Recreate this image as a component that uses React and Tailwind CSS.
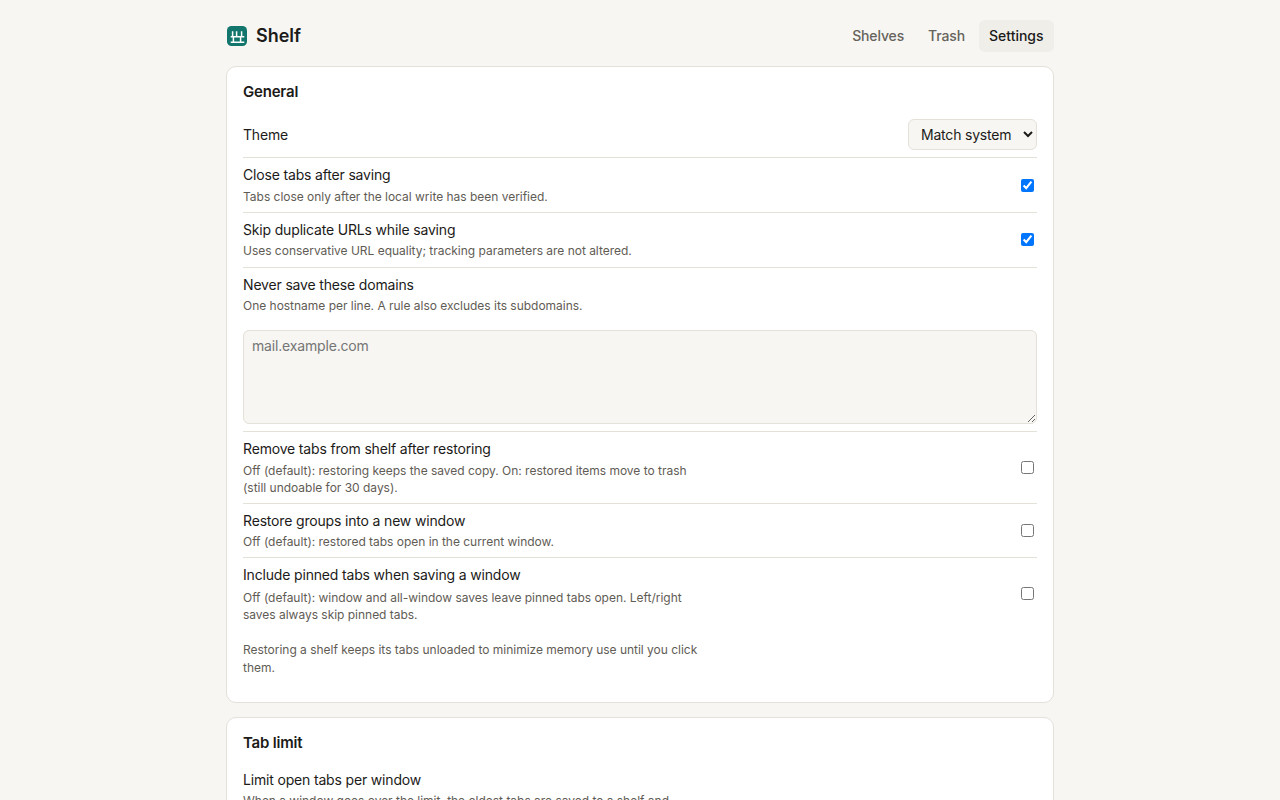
const sans = "font-['Inter',sans-serif]";
const title = "text-[14px] leading-[20px] tracking-[-0.17px] text-[#1c1b19]";
const noteBase = "text-[12px] tracking-[-0.02px] text-[#5f5c55]";
const note = `leading-[18px] ${noteBase}`;
const noteTight = `leading-[17px] ${noteBase}`;
const heading = "text-[15px] leading-[20px] tracking-[-0.2px] font-semibold text-[#1c1b19]";

function Row({ name, desc, checked, descGap = "mt-[2px]", bottom = "pb-[7px]", border = true, descClass = note, box = "mt-[2px] mb-[4px]" }) {
  return (
    <div className={`flex justify-between items-center pt-[7px] ${bottom} ${border ? "border-b border-[#e4e1d9]" : ""}`}>
      <div className="max-w-[460px]">
        <div className={title}>{name}</div>
        <div className={`${descGap} ${descClass}`}>{desc}</div>
      </div>
      <input type="checkbox" defaultChecked={checked} className={`mx-[3px] ${box} w-[13px] h-[13px] shrink-0`} />
    </div>
  );
}

export default function App() {
  return (
    <div className={`h-screen overflow-hidden bg-[#f7f6f2] ${sans}`}>
      <div className="w-[828px] mx-auto">
        <header className="flex items-center justify-between pt-5 pb-[14px]">
          <div className="flex items-center gap-2">
            <svg width="22" height="22" viewBox="0 0 22 22" className="block">
              <rect x="1" y="1" width="20" height="20" rx="4.5" fill="#12766c" />
              <path d="M4.7 11.7h13.6M4.7 17.2h13.6" stroke="#fff" strokeWidth="1.5" fill="none" />
              <path d="M6.6 6.2v5M10.6 6.2v5M15.6 6.2v5M7.4 12v5M14.6 12v5" stroke="#fff" strokeWidth="1.5" fill="none" />
            </svg>
            <span className="text-[18px] leading-[32px] font-semibold text-[#1c1b19]">Shelf</span>
          </div>
          <nav className="flex items-center gap-1">
            <a className="px-[10px] pb-[1px] h-8 flex items-center rounded-md text-[14px] tracking-[-0.14px] font-medium text-[#66635c]">Shelves</a>
            <a className="px-[10px] pb-[1px] h-8 flex items-center rounded-md text-[14px] tracking-[-0.14px] font-medium text-[#66635c]">Trash</a>
            <a className="px-[10px] pb-[1px] h-8 w-[75px] flex items-center rounded-md text-[14px] font-medium text-[#1c1b19] bg-[#efeee9]">Settings</a>
          </nav>
        </header>

        <section className="bg-white border border-[#e4e1d9] rounded-[10px] px-4 pt-[15px] pb-[25px]">
          <h2 className={`${heading} mb-[10px]`}>General</h2>
          <div className="flex items-center justify-between border-b border-[#e4e1d9] pt-[7px] pb-[7px]">
            <span className={title}>Theme</span>
            <select defaultValue="Match system" className="h-[31px] w-[129px] pl-2 text-[14px] tracking-[-0.2px] text-[#1c1b19] bg-[#f7f6f2] border border-[#e4e1d9] rounded-md">
              <option>Match system</option>
              <option>Light</option>
              <option>Dark</option>
            </select>
          </div>
          <Row name="Close tabs after saving" desc="Tabs close only after the local write has been verified." checked descGap="mt-[3px]" bottom="pb-[6px]" box="my-[3px]" />
          <Row name="Skip duplicate URLs while saving" desc="Uses conservative URL equality; tracking parameters are not altered." checked />
          <div className="pt-[7px] pb-[7px] border-b border-[#e4e1d9]">
            <div className={title}>Never save these domains</div>
            <div className={`mt-[2px] ${note}`}>One hostname per line. A rule also excludes its subdomains.</div>
            <textarea placeholder="mail.example.com" className="block mt-[15px] w-full h-[94px] px-2 py-[5px] text-[14px] leading-[20px] tracking-[-0.17px] bg-[#f7f6f2] border border-[#e4e1d9] rounded-md placeholder:text-[#757575]" />
          </div>
          <Row name="Remove tabs from shelf after restoring" desc="Off (default): restoring keeps the saved copy. On: restored items move to trash (still undoable for 30 days)." descClass={noteTight} descGap="mt-[3px]" bottom="pb-[7px]" box="my-[3px]" />
          <Row name="Restore groups into a new window" desc="Off (default): restored tabs open in the current window." bottom="pb-[6px]" />
          <Row name="Include pinned tabs when saving a window" desc="Off (default): window and all-window saves leave pinned tabs open. Left/right saves always skip pinned tabs." border={false} descGap="mt-[4px]" descClass={noteTight} bottom="pb-[5px]" />
          <p className={`mt-[13px] max-w-[460px] ${note}`}>Restoring a shelf keeps its tabs unloaded to minimize memory use until you click them.</p>
        </section>

        <section className="mt-[14px] bg-white border border-[#e4e1d9] rounded-[10px] px-4 pt-[15px] pb-4">
          <h2 className={`${heading} mb-[10px]`}>Tab limit</h2>
          <div className="pt-[7px]">
            <div className={title}>Limit open tabs per window</div>
            <div className={`mt-[2px] max-w-[460px] ${note}`}>When a window goes over the limit, the oldest tabs are saved to a shelf and closed.</div>
          </div>
        </section>
      </div>
    </div>
  );
}
